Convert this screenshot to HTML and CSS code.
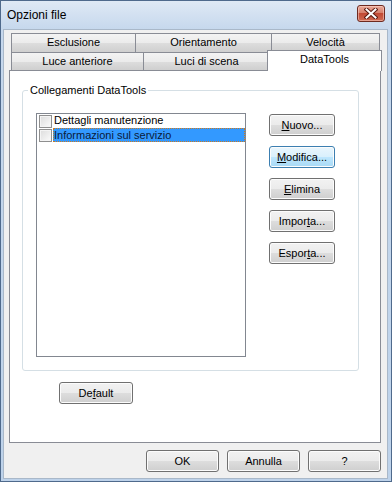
FILE: index.html
```html
<!DOCTYPE html>
<html lang="it">
<head>
    <meta charset="UTF-8">
    <title>Opzioni file</title>
    <link rel="stylesheet" href="styles.css">
</head>
<body>

    <div class="window">
        <!-- Barra del titolo -->
        <div class="titlebar">
            <span class="title">Opzioni file</span>
            <span class="close-btn">
                <svg width="14" height="11" viewBox="0 0 14 11">
                    <path d="M2.5 1.5 L11.5 9.5 M11.5 1.5 L2.5 9.5" stroke="#5a1a10" stroke-width="4" stroke-linecap="square"/>
                    <path d="M2.5 1.5 L11.5 9.5 M11.5 1.5 L2.5 9.5" stroke="#ffffff" stroke-width="2" stroke-linecap="square"/>
                </svg>
            </span>
        </div>

        <div class="client">
            <!-- Schede -->
            <div class="tabs">
                <div class="tab-row back">
                    <div class="tab t-escl">Esclusione</div>
                    <div class="tab t-orie">Orientamento</div>
                    <div class="tab t-velo">Velocità</div>
                </div>
                <div class="tab-row front">
                    <div class="tab t-luce">Luce anteriore</div>
                    <div class="tab t-scena">Luci di scena</div>
                    <div class="tab t-data active">DataTools</div>
                </div>
            </div>

            <div class="panel">
                <fieldset class="group">
                    <legend>Collegamenti DataTools</legend>
                    <div class="group-body">
                        <div class="listbox">
                            <div class="list-item">
                                <span class="check"></span>
                                <span class="item-text">Dettagli manutenzione</span>
                            </div>
                            <div class="list-item selected">
                                <span class="check"></span>
                                <span class="item-text">Informazioni sul servizio</span>
                            </div>
                        </div>
                        <div class="side-buttons">
                            <button class="btn small"><u>N</u>uovo...</button>
                            <button class="btn small focus"><u>M</u>odifica...</button>
                            <button class="btn small"><u>E</u>limina</button>
                            <button class="btn small">Impor<u>t</u>a...</button>
                            <button class="btn small">Espor<u>t</u>a...</button>
                        </div>
                    </div>
                </fieldset>
                <button class="btn default-btn">De<u>f</u>ault</button>
            </div>

            <!-- Pulsanti finali -->
            <div class="footer">
                <button class="btn">OK</button>
                <button class="btn">Annulla</button>
                <button class="btn">?</button>
            </div>
        </div>
    </div>

</body>
</html>
```

FILE: styles.css
```css
* {
    box-sizing: border-box;
}

body {
    margin: 0;
    font-family: "Liberation Sans", Arial, sans-serif;
    font-size: 11px;
    color: #000;
}

/* Finestra */
.window {
    width: 392px;
    height: 482px;
    border: 1px solid #4f6a8c;
    background: linear-gradient(to bottom, #dfe9f5, #c6d8ed 28px, #bdd2ea);
    display: flex;
    flex-direction: column;
}

.titlebar {
    height: 28px;
    display: flex;
    justify-content: space-between;
    align-items: flex-start;
    padding: 0 6px 0 6px;
}

.title {
    font-size: 12px;
    line-height: 12px;
    margin-top: 8px;
    color: #000;
}

.close-btn {
    margin-top: 4px;
    width: 28px;
    height: 17px;
    border: 1px solid #6e2a20;
    border-radius: 3px;
    background: linear-gradient(to bottom, #e9a999, #d7806c 45%, #c24a34 50%, #cf6a52);
    box-shadow: inset 0 0 0 1px rgba(255, 220, 210, 0.5);
    display: flex;
    align-items: center;
    justify-content: center;
}

.close-btn svg {
    display: block;
}

.client {
    flex: 1;
    margin: 0 3px 2px 2px;
    background: #f0f0f0;
    border: 1px solid #a9b8c9;
    padding-top: 3px;
    display: flex;
    flex-direction: column;
}

/* Schede */
.tabs {
    padding-left: 7px;
}

.tab-row {
    display: flex;
}

.tab-row.back {
    height: 19px;
}

.tab-row.front {
    height: 18px;
}

.tab {
    border: 1px solid #898c95;
    border-bottom: none;
    background: linear-gradient(to bottom, #f3f3f3, #ebebeb 50%, #dddddd 51%, #cfcfcf);
    text-align: center;
    line-height: 17px;
    margin-left: -1px;
    white-space: nowrap;
}

.t-escl { width: 125px; margin-left: 0; }
.t-orie { width: 137px; }
.t-velo { width: 109px; }
.t-luce { width: 133px; margin-left: 0; }
.t-scena { width: 127px; }
.t-data { width: 111px; }

.tab.active {
    position: relative;
    z-index: 2;
    width: 115px;
    margin: -2px -2px -1px -3px;
    height: 21px;
    background: #ffffff;
    line-height: 16px;
}

/* Pannello */
.panel {
    position: relative;
    z-index: 1;
    margin: 0 6px 0 5px;
    height: 373px;
    border: 1px solid #898c95;
    background: #ffffff;
    padding: 13px 0 0 12px;
}

.group {
    width: 337px;
    height: 287px;
    margin: 0;
    padding: 0;
    border: 1px solid #d5dfe5;
    border-radius: 3px;
}

.group legend {
    margin-left: 5px;
    padding: 0 2px;
    line-height: 13px;
}

.group-body {
    display: flex;
    align-items: flex-start;
    padding: 16px 0 0 13px;
    gap: 23px;
}

.listbox {
    width: 210px;
    height: 244px;
    border: 1px solid #828790;
    background: #ffffff;
}

.list-item {
    display: flex;
    height: 14px;
    align-items: center;
}

.check {
    width: 13px;
    height: 13px;
    margin-left: 2px;
    border: 1px solid #8f8f8f;
    background: linear-gradient(to bottom right, #dcdcdc, #fbfbfb);
    box-shadow: inset 0 0 0 1px #f4f4f4;
    flex-shrink: 0;
}

.item-text {
    flex: 1;
    height: 14px;
    line-height: 13px;
    padding-left: 1px;
    margin-left: 1px;
    white-space: nowrap;
}

.list-item.selected .item-text {
    background: #3399ff;
    color: #0a1a3a;
    border: 1px dotted #cc7a1e;
    line-height: 12px;
    padding-left: 0;
}

.side-buttons {
    display: flex;
    flex-direction: column;
    gap: 10px;
    padding-top: 1px;
}

/* Pulsanti */
.btn {
    width: 73px;
    height: 22px;
    padding: 0;
    font-family: "Liberation Sans", Arial, sans-serif;
    font-size: 11px;
    color: #000;
    border: 1px solid #707070;
    border-radius: 3px;
    background: linear-gradient(to bottom, #f2f2f2, #ebebeb 50%, #dddddd 51%, #cfcfcf);
    box-shadow: inset 0 0 0 1px #fcfcfc;
}

.btn.small {
    width: 66px;
}

.btn.focus {
    border-color: #3c7fb1;
    background: linear-gradient(to bottom, #eaf6fd, #d9f0fc 50%, #bee6fd 51%, #a7d9f5);
}

.default-btn {
    width: 74px;
    margin: 11px 0 0 37px;
    display: block;
}

.footer {
    display: flex;
    justify-content: flex-end;
    gap: 8px;
    padding: 7px 6px 0 0;
}
```
